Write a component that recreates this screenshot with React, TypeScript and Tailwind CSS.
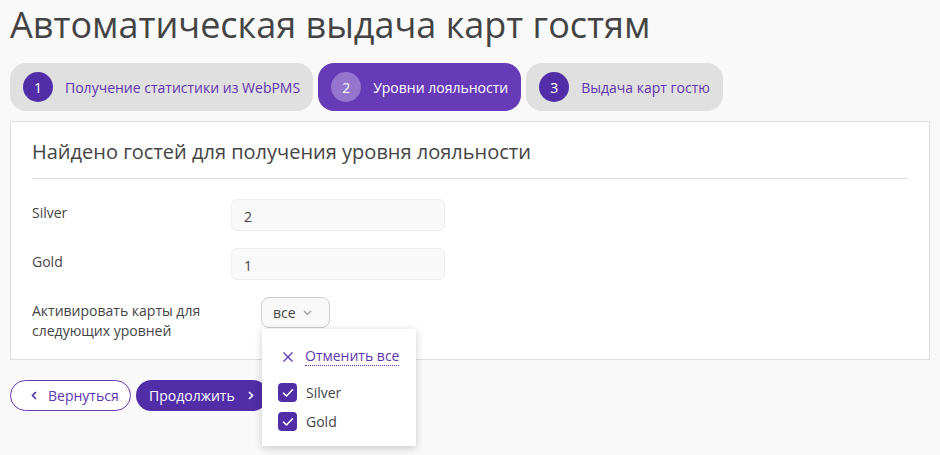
import React from "react";

const font = { fontFamily: '"Open Sans", "Noto Sans", sans-serif' };

function Step({ n, label, active }: { n: number; label: string; active?: boolean }) {
  return (
    <div
      className={
        "flex items-center h-[48px] rounded-[16px] pl-[13px] pr-[13px] gap-[12px] " +
        (active ? "bg-[#673ab7]" : "bg-[#e0e0e0]")
      }
    >
      <div
        className={
          "w-[30px] h-[30px] rounded-full flex items-center justify-center text-[14px] text-white " +
          (active ? "bg-[#9575cd]" : "bg-[#512da8]")
        }
      >
        {n}
      </div>
      <span className={"text-[14px] " + (active ? "text-white" : "text-[#5e35b1]")}>{label}</span>
    </div>
  );
}

function Check() {
  return (
    <div className="w-[19px] h-[19px] rounded-[4px] bg-[#512da8] flex items-center justify-center">
      <svg width="12" height="10" viewBox="0 0 12 10" fill="none">
        <path d="M1.5 5.2 L4.5 8 L10.5 1.8" stroke="white" strokeWidth="1.6" strokeLinecap="round" strokeLinejoin="round" />
      </svg>
    </div>
  );
}

export default function App() {
  return (
    <div className="min-h-[455px] w-[940px] bg-[#f9f9f9] text-[#444]" style={font}>
      <div className="px-[10px] pt-[3px]">
        <h1 className="text-[36px] leading-[44px] text-[#444]">Автоматическая выдача карт гостям</h1>
        <div className="flex gap-[5px] mt-[16px]">
          <Step n={1} label="Получение статистики из WebPMS" />
          <Step n={2} label="Уровни лояльности" active />
          <Step n={3} label="Выдача карт гостю" />
        </div>
        <div className="mt-[10px] bg-white border border-[#ddd] px-[21px] pt-[16px] pb-[18px]">
          <div className="text-[20px] leading-[28px] text-[#444] pb-[12px] border-b border-[#ddd]">
            Найдено гостей для получения уровня лояльности
          </div>
          <div className="flex flex-col gap-[17px] mt-[20px]">
            <div className="flex items-center">
              <div className="w-[199px] text-[14px] -mt-[5px]">Silver</div>
              <div className="w-[214px] h-[32px] rounded-[6px] bg-[#f9f9f9] border border-[#eee] flex items-center px-[12px] text-[14px] pt-[2px]">2</div>
            </div>
            <div className="flex items-center">
              <div className="w-[199px] text-[14px] -mt-[5px]">Gold</div>
              <div className="w-[214px] h-[32px] rounded-[6px] bg-[#f9f9f9] border border-[#eee] flex items-center px-[12px] text-[14px] pt-[2px]">1</div>
            </div>
            <div className="flex items-start">
              <div className="w-[229px] text-[14px] leading-[20px] pt-[4px]">
                Активировать карты для
                <br />
                следующих уровней
              </div>
              <div className="relative">
                <div className="h-[31px] pl-[11px] pr-[17px] rounded-[8px] border border-[#ccc] bg-[#f9f9f9] flex items-center gap-[7px] text-[14px]">
                  <span>все</span>
                  <svg width="9" height="6" viewBox="0 0 9 6" fill="none">
                    <path d="M1 1 L4.5 4.5 L8 1" stroke="#999" strokeWidth="1.2" />
                  </svg>
                </div>
                <div className="absolute left-[1px] top-[32px] w-[154px] bg-white shadow-[0_2px_8px_rgba(0,0,0,0.2)] px-[16px] pt-[18px] pb-[14px] z-10">
                  <div className="flex items-center gap-[11px] text-[#5e35b1]">
                    <svg width="12" height="12" viewBox="0 0 12 12" fill="none" className="ml-[4px]">
                      <path d="M1.5 1.5 L10.5 10.5 M10.5 1.5 L1.5 10.5" stroke="#5e35b1" strokeWidth="1.3" />
                    </svg>
                    <span className="text-[14px] border-b border-dotted border-[#5e35b1] leading-[18px]">Отменить все</span>
                  </div>
                  <div className="mt-[16px] flex flex-col gap-[8px]">
                    <div className="flex items-center gap-[9px] text-[14px]">
                      <Check />
                      <span>Silver</span>
                    </div>
                    <div className="flex items-center gap-[9px] text-[14px]">
                      <Check />
                      <span>Gold</span>
                    </div>
                  </div>
                </div>
              </div>
            </div>
          </div>
        </div>
        <div className="flex gap-[5px] mt-[20px]">
          <button className="h-[31px] w-[121px] rounded-full border border-[#673ab7] bg-white text-[#5e35b1] text-[14px] flex items-center pl-[20px] gap-[11px]">
            <svg width="6" height="9" viewBox="0 0 6 9" fill="none">
              <path d="M5 1 L1.5 4.5 L5 8" stroke="#512da8" strokeWidth="1.6" />
            </svg>
            <span>Вернуться</span>
          </button>
          <button className="h-[31px] w-[132px] rounded-full bg-[#512da8] text-white text-[14px] flex items-center pl-[13px] gap-[13px]">
            <span>Продолжить</span>
            <svg width="6" height="9" viewBox="0 0 6 9" fill="none">
              <path d="M1 1 L4.5 4.5 L1 8" stroke="white" strokeWidth="1.6" />
            </svg>
          </button>
        </div>
      </div>
    </div>
  );
}
